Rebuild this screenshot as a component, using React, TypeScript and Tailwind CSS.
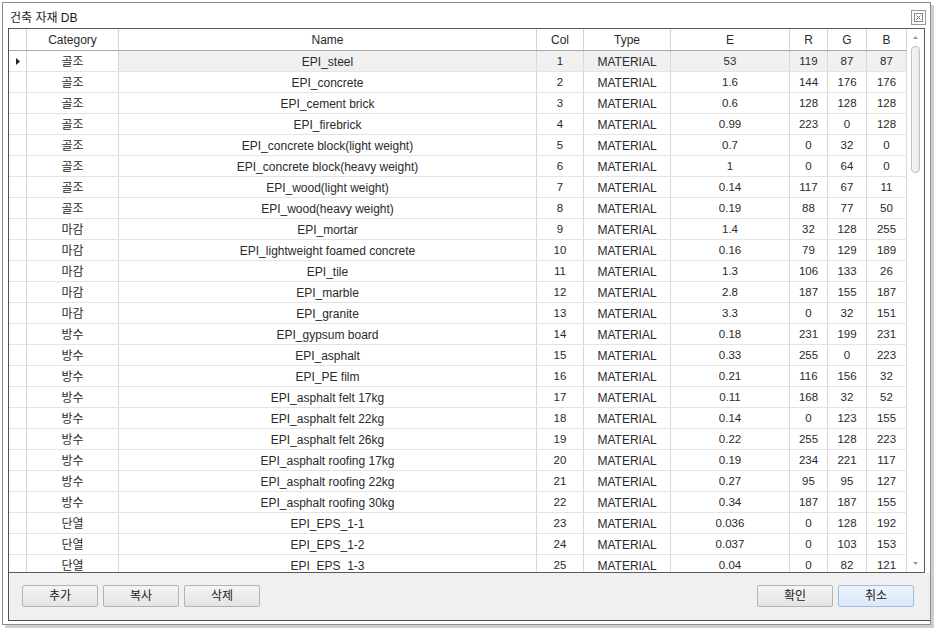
import React from "react";

type Row = [string, string, string, string, string, string, string];

const rows: Row[] = [
  ["골조", "EPI_steel", "1", "53", "119", "87", "87"],
  ["골조", "EPI_concrete", "2", "1.6", "144", "176", "176"],
  ["골조", "EPI_cement brick", "3", "0.6", "128", "128", "128"],
  ["골조", "EPI_firebrick", "4", "0.99", "223", "0", "128"],
  ["골조", "EPI_concrete block(light weight)", "5", "0.7", "0", "32", "0"],
  ["골조", "EPI_concrete block(heavy weight)", "6", "1", "0", "64", "0"],
  ["골조", "EPI_wood(light weight)", "7", "0.14", "117", "67", "11"],
  ["골조", "EPI_wood(heavy weight)", "8", "0.19", "88", "77", "50"],
  ["마감", "EPI_mortar", "9", "1.4", "32", "128", "255"],
  ["마감", "EPI_lightweight foamed concrete", "10", "0.16", "79", "129", "189"],
  ["마감", "EPI_tile", "11", "1.3", "106", "133", "26"],
  ["마감", "EPI_marble", "12", "2.8", "187", "155", "187"],
  ["마감", "EPI_granite", "13", "3.3", "0", "32", "151"],
  ["방수", "EPI_gypsum board", "14", "0.18", "231", "199", "231"],
  ["방수", "EPI_asphalt", "15", "0.33", "255", "0", "223"],
  ["방수", "EPI_PE film", "16", "0.21", "116", "156", "32"],
  ["방수", "EPI_asphalt felt 17kg", "17", "0.11", "168", "32", "52"],
  ["방수", "EPI_asphalt felt 22kg", "18", "0.14", "0", "123", "155"],
  ["방수", "EPI_asphalt felt 26kg", "19", "0.22", "255", "128", "223"],
  ["방수", "EPI_asphalt roofing 17kg", "20", "0.19", "234", "221", "117"],
  ["방수", "EPI_asphalt roofing 22kg", "21", "0.27", "95", "95", "127"],
  ["방수", "EPI_asphalt roofing 30kg", "22", "0.34", "187", "187", "155"],
  ["단열", "EPI_EPS_1-1", "23", "0.036", "0", "128", "192"],
  ["단열", "EPI_EPS_1-2", "24", "0.037", "0", "103", "153"],
  ["단열", "EPI_EPS_1-3", "25", "0.04", "0", "82", "121"],
];

const widths = [
  "w-[92px]",
  "w-[418px]",
  "w-[47px]",
  "w-[87px]",
  "w-[119px]",
  "w-[38px]",
  "w-[39px]",
  "w-[40px]",
];

const headers = ["Category", "Name", "Col", "Type", "E", "R", "G", "B"];

const FONT = "font-['Liberation_Sans','Noto_Sans_CJK_KR',sans-serif]";

function Btn({ label, blue }: { label: string; blue?: boolean }) {
  return (
    <div
      className={
        "w-[76px] h-[22px] flex items-center justify-center text-[12px] text-[#222] border rounded-[2px] " +
        (blue
          ? "border-[#9fbfe6] bg-gradient-to-b from-[#eef4fd] to-[#dbe8fa]"
          : "border-[#b4b4b4] bg-gradient-to-b from-[#f4f4f4] to-[#e3e3e3]")
      }
    >
      {label}
    </div>
  );
}

export default function App() {
  return (
    <div className={"w-[937px] h-[629px] bg-white overflow-hidden " + FONT}>
      <div className="ml-[2px] mt-[2px] w-[929px] h-[623px] border border-[#8c8c8c] bg-white shadow-[3px_3px_0_#cfcfcf] flex flex-col">
        {/* title bar */}
        <div className="h-[25px] pt-[4px] pl-[7px] pr-[4px] flex items-center justify-between">
          <span className="text-[12px] text-[#1a1a1a]">건축 자재 DB</span>
          <div className="w-[15px] h-[15px] border border-[#9a9a9a] bg-white flex items-center justify-center">
            <svg width="9" height="9" viewBox="0 0 9 9">
              <rect x="0.5" y="0.5" width="8" height="8" fill="none" stroke="#8a8a8a" />
              <path d="M2.5 2.5 L6.5 6.5 M6.5 2.5 L2.5 6.5" stroke="#6a6a6a" strokeWidth="1" />
            </svg>
          </div>
        </div>
        {/* body */}
        <div className="ml-[5px] flex-1 min-h-0 flex flex-col border-l border-b border-[#505050] mb-[3px]">
          {/* grid */}
          <div className="w-[916px] h-[545px] border-t border-r border-b border-[#5a5a5a] flex bg-white text-[#2a2a2a]">
            <div className="w-[898px] h-full overflow-hidden flex flex-col">
              {/* header */}
              <div className="flex h-[22px] shrink-0 border-b border-[#a9a9a9]">
                <div className="w-[18px] border-r border-[#d4d4d4]" />
                {headers.map((h, i) => (
                  <div
                    key={h}
                    className={
                      widths[i] +
                      " shrink-0 border-r border-[#d4d4d4] flex items-center justify-center text-[12px]"
                    }
                  >
                    {h}
                  </div>
                ))}
              </div>
              {rows.map((r, ri) => {
                const cells = [r[0], r[1], r[2], "MATERIAL", r[3], r[4], r[5], r[6]];
                return (
                  <div key={ri} className="flex h-[21px] shrink-0 border-b border-[#e4e4e4]">
                    <div className="w-[18px] shrink-0 border-r border-[#d4d4d4] flex items-center justify-center">
                      {ri === 0 && (
                        <svg width="4" height="7" viewBox="0 0 4 7">
                          <path d="M0 0 L4 3.5 L0 7 Z" fill="#222" />
                        </svg>
                      )}
                    </div>
                    {cells.map((c, ci) => (
                      <div
                        key={ci}
                        className={
                          widths[ci] +
                          " shrink-0 border-r border-[#d8d8d8] flex items-center justify-center whitespace-nowrap pt-[1px] " +
                          (ci === 0 || ci === 1 || ci === 3 ? "text-[12px] " : "text-[11.5px] ") +
                          (ri === 0 && ci > 0 ? "bg-[#f0f0f0]" : "")
                        }
                      >
                        {c}
                      </div>
                    ))}
                  </div>
                );
              })}
            </div>
            {/* scrollbar */}
            <div className="w-[17px] h-full flex flex-col items-center bg-white">
              <div className="h-[17px] w-full flex items-center justify-center">
                <svg width="5" height="3" viewBox="0 0 5 3">
                  <path d="M0 3 L2.5 0 L5 3 Z" fill="#9a9a9a" />
                </svg>
              </div>
              <div className="w-[9px] h-[127px] rounded-[4px] border border-[#c2c2c2] bg-gradient-to-r from-[#f6f6f6] to-[#e9e9e9]" />
              <div className="flex-1" />
              <div className="h-[17px] w-full flex items-center justify-center">
                <svg width="5" height="3" viewBox="0 0 5 3">
                  <path d="M0 0 L5 0 L2.5 3 Z" fill="#9a9a9a" />
                </svg>
              </div>
            </div>
          </div>
          {/* buttons */}
          <div className="flex-1 bg-[#f0f0f0] pt-[12px] pl-[13px] pr-[16px] flex justify-between items-start">
            <div className="flex gap-[5px]">
              <Btn label="추가" />
              <Btn label="복사" />
              <Btn label="삭제" />
            </div>
            <div className="flex gap-[5px]">
              <Btn label="확인" />
              <Btn label="취소" blue />
            </div>
          </div>
        </div>
      </div>
    </div>
  );
}
